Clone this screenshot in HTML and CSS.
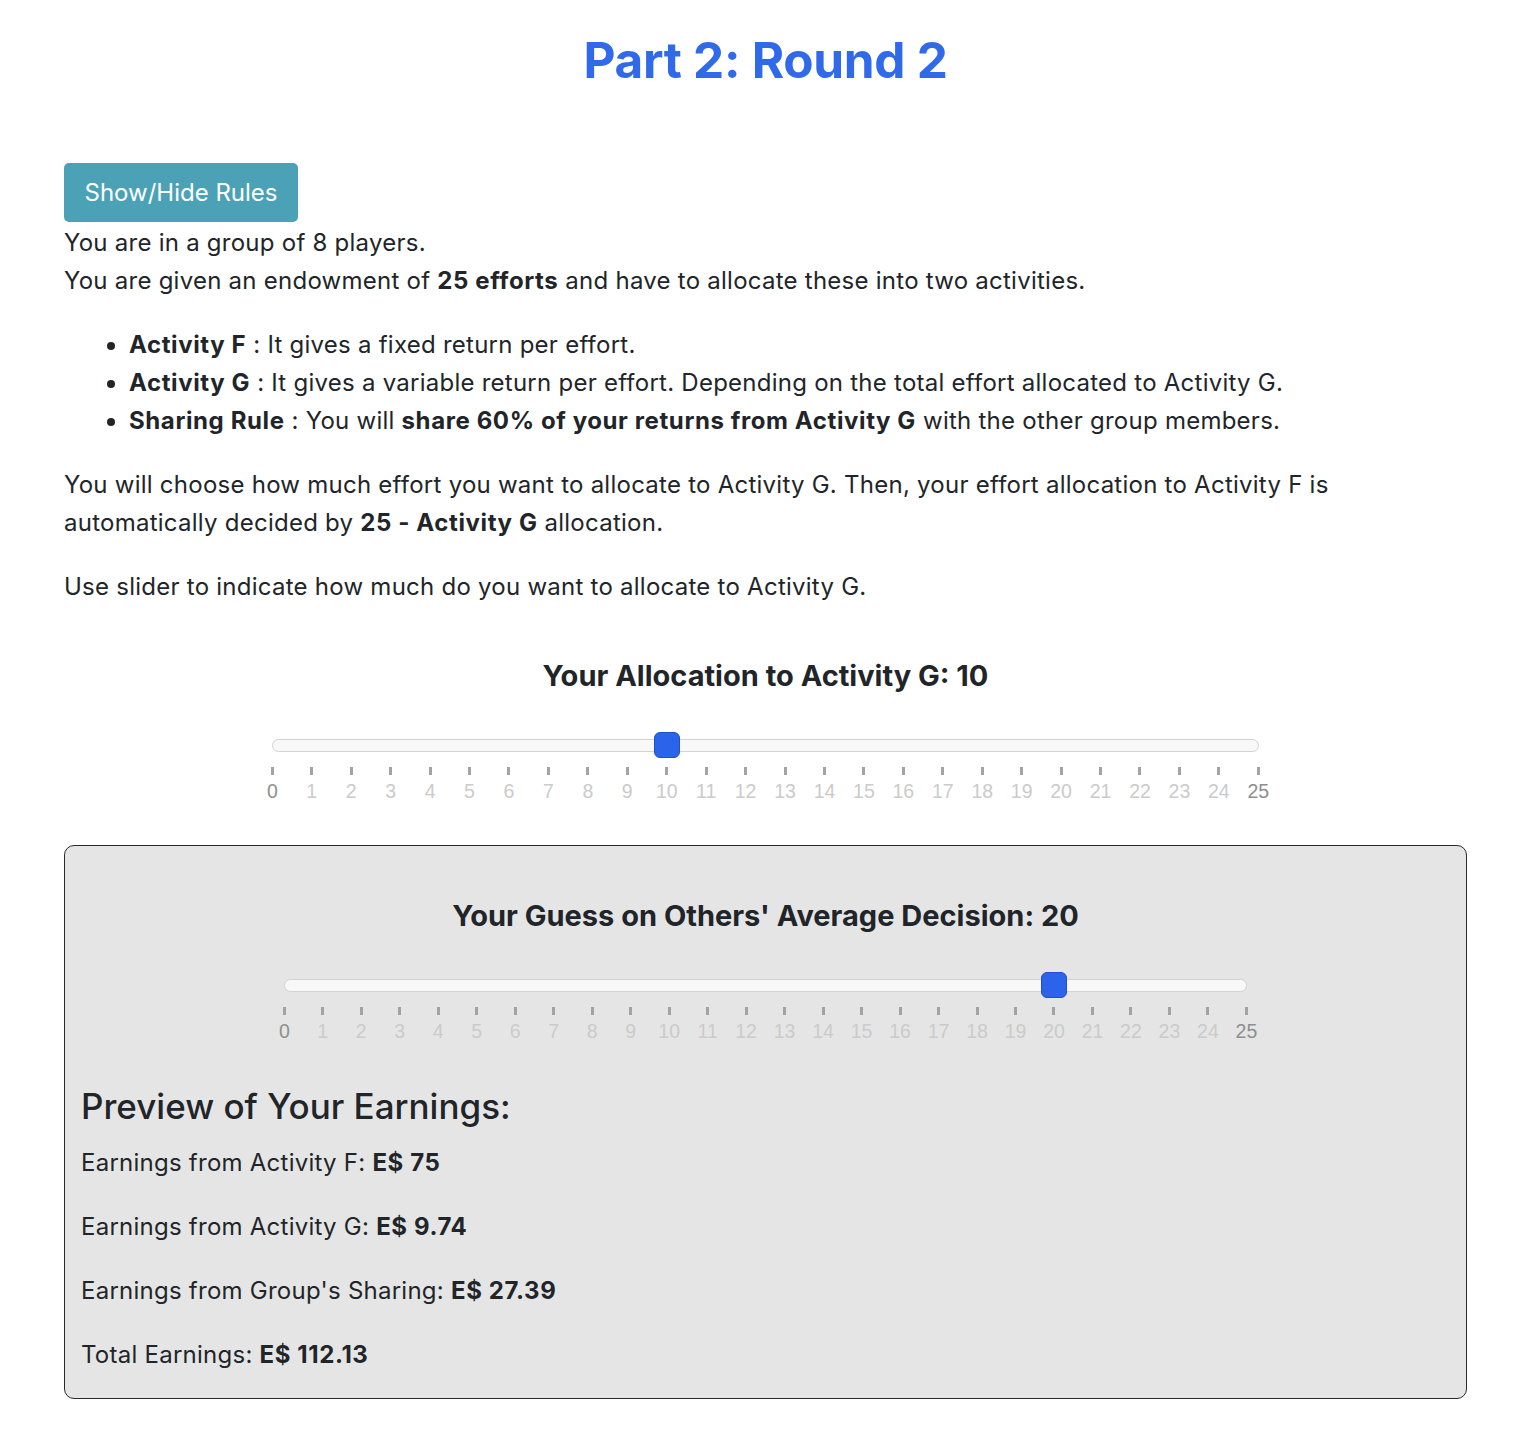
FILE: index.html
```html
<!DOCTYPE html>
<html lang="en">
<head>
<meta charset="utf-8">
<title>Part 2: Round 2</title>
<link rel="stylesheet" href="styles.css">
</head>
<body>
<div class="container">
  <h1 class="title">Part 2: Round 2</h1>
  <button class="btn-rules" type="button">Show/Hide Rules</button>
  <div class="rules">
    <div>You are in a group of 8 players.</div>
    <div>You are given an endowment of <b>25 efforts</b> and have to allocate these into two activities.</div>
    <ul class="rule-list">
      <li><b>Activity F</b> : It gives a fixed return per effort.</li>
      <li><b>Activity G</b> : It gives a variable return per effort. Depending on the total effort allocated to Activity G.</li>
      <li><b>Sharing Rule</b> : You will <b>share 60% of your returns from Activity G</b> with the other group members.</li>
    </ul>
  </div>
  <p>You will choose how much effort you want to allocate to Activity G. Then, your effort allocation to Activity F is automatically decided by <b>25 - Activity G</b> allocation.</p>
  <p>Use slider to indicate how much do you want to allocate to Activity G.</p>

  <div class="slider-block">
    <h4 class="slider-title">Your Allocation to Activity G: 10</h4>
    <div class="slider">
      <div class="rail">
        <div class="track"></div>
        <div class="handle" style="left: 40%;"></div>
      </div>
      <div class="grid">
        <div class="tick edge"><span class="mark"></span><span class="num">0</span></div>
        <div class="tick"><span class="mark"></span><span class="num">1</span></div>
        <div class="tick"><span class="mark"></span><span class="num">2</span></div>
        <div class="tick"><span class="mark"></span><span class="num">3</span></div>
        <div class="tick"><span class="mark"></span><span class="num">4</span></div>
        <div class="tick"><span class="mark"></span><span class="num">5</span></div>
        <div class="tick"><span class="mark"></span><span class="num">6</span></div>
        <div class="tick"><span class="mark"></span><span class="num">7</span></div>
        <div class="tick"><span class="mark"></span><span class="num">8</span></div>
        <div class="tick"><span class="mark"></span><span class="num">9</span></div>
        <div class="tick"><span class="mark"></span><span class="num">10</span></div>
        <div class="tick"><span class="mark"></span><span class="num">11</span></div>
        <div class="tick"><span class="mark"></span><span class="num">12</span></div>
        <div class="tick"><span class="mark"></span><span class="num">13</span></div>
        <div class="tick"><span class="mark"></span><span class="num">14</span></div>
        <div class="tick"><span class="mark"></span><span class="num">15</span></div>
        <div class="tick"><span class="mark"></span><span class="num">16</span></div>
        <div class="tick"><span class="mark"></span><span class="num">17</span></div>
        <div class="tick"><span class="mark"></span><span class="num">18</span></div>
        <div class="tick"><span class="mark"></span><span class="num">19</span></div>
        <div class="tick"><span class="mark"></span><span class="num">20</span></div>
        <div class="tick"><span class="mark"></span><span class="num">21</span></div>
        <div class="tick"><span class="mark"></span><span class="num">22</span></div>
        <div class="tick"><span class="mark"></span><span class="num">23</span></div>
        <div class="tick"><span class="mark"></span><span class="num">24</span></div>
        <div class="tick edge"><span class="mark"></span><span class="num">25</span></div>
      </div>
    </div>
  </div>

  <div class="guess-box">
    <div class="slider-block inner">
      <h4 class="slider-title">Your Guess on Others' Average Decision: 20</h4>
      <div class="slider">
        <div class="rail">
          <div class="track"></div>
          <div class="handle" style="left: 80%;"></div>
        </div>
        <div class="grid">
          <div class="tick edge"><span class="mark"></span><span class="num">0</span></div>
          <div class="tick"><span class="mark"></span><span class="num">1</span></div>
          <div class="tick"><span class="mark"></span><span class="num">2</span></div>
          <div class="tick"><span class="mark"></span><span class="num">3</span></div>
          <div class="tick"><span class="mark"></span><span class="num">4</span></div>
          <div class="tick"><span class="mark"></span><span class="num">5</span></div>
          <div class="tick"><span class="mark"></span><span class="num">6</span></div>
          <div class="tick"><span class="mark"></span><span class="num">7</span></div>
          <div class="tick"><span class="mark"></span><span class="num">8</span></div>
          <div class="tick"><span class="mark"></span><span class="num">9</span></div>
          <div class="tick"><span class="mark"></span><span class="num">10</span></div>
          <div class="tick"><span class="mark"></span><span class="num">11</span></div>
          <div class="tick"><span class="mark"></span><span class="num">12</span></div>
          <div class="tick"><span class="mark"></span><span class="num">13</span></div>
          <div class="tick"><span class="mark"></span><span class="num">14</span></div>
          <div class="tick"><span class="mark"></span><span class="num">15</span></div>
          <div class="tick"><span class="mark"></span><span class="num">16</span></div>
          <div class="tick"><span class="mark"></span><span class="num">17</span></div>
          <div class="tick"><span class="mark"></span><span class="num">18</span></div>
          <div class="tick"><span class="mark"></span><span class="num">19</span></div>
          <div class="tick"><span class="mark"></span><span class="num">20</span></div>
          <div class="tick"><span class="mark"></span><span class="num">21</span></div>
          <div class="tick"><span class="mark"></span><span class="num">22</span></div>
          <div class="tick"><span class="mark"></span><span class="num">23</span></div>
          <div class="tick"><span class="mark"></span><span class="num">24</span></div>
          <div class="tick edge"><span class="mark"></span><span class="num">25</span></div>
        </div>
      </div>
    </div>
    <h3 class="preview-title">Preview of Your Earnings:</h3>
    <p>Earnings from Activity F: <b>E$ 75</b></p>
    <p>Earnings from Activity G: <b>E$ 9.74</b></p>
    <p>Earnings from Group's Sharing: <b>E$ 27.39</b></p>
    <p class="last">Total Earnings: <b>E$ 112.13</b></p>
  </div>
</div>
</body>
</html>
```

FILE: styles.css
```css
* { box-sizing: border-box; }

html, body {
  margin: 0;
  padding: 0;
  background: #ffffff;
}

body {
  font-family: Inter, "Noto Sans", "Liberation Sans", sans-serif;
  font-size: 24px;
  line-height: 38px;
  letter-spacing: 0.25px;
  color: #212529;
}

b {
  font-weight: 700;
  letter-spacing: 0.6px;
}

.container {
  padding: 30px 59px 40px 64px;
}

.title {
  margin: 0;
  text-align: center;
  font-size: 49.5px;
  line-height: 61px;
  font-weight: 700;
  color: #306aeb;
  letter-spacing: -0.3px;
}

.btn-rules {
  display: block;
  margin-top: 72px;
  width: 234px;
  height: 59px;
  padding: 0;
  border: none;
  border-radius: 5px;
  background: #4ba2b6;
  color: #ffffff;
  font-family: inherit;
  font-size: 24px;
  line-height: 59px;
  letter-spacing: 0;
  cursor: pointer;
}

.rules { margin-top: 2px; }

.rule-list {
  margin: 26px 0 26px;
  padding-left: 65px;
}

p { margin: 0 0 26px; }

.slider-block {
  margin-top: 50px;
  margin-bottom: 43px;
  text-align: center;
}

.slider-title {
  margin: 0;
  font-size: 29px;
  line-height: 40px;
  font-weight: 700;
  letter-spacing: 0;
}

.slider {
  width: 70.3%;
  margin: 36px auto 0;
}

.rail {
  position: relative;
  height: 26px;
  display: flex;
  align-items: center;
}

.track {
  flex: 1;
  height: 13px;
  border: 1px solid #d3d3d3;
  border-radius: 7px;
  background: #f8f8f8;
}

.handle {
  position: absolute;
  top: 0;
  width: 26px;
  height: 26px;
  margin-left: -13px;
  border: 1px solid #1f50c8;
  border-radius: 6px;
  background: #2c63eb;
}

.grid {
  display: flex;
  justify-content: space-between;
  margin-top: 9px;
}

.tick {
  width: 0;
  display: flex;
  flex-direction: column;
  align-items: center;
}

.mark {
  display: block;
  width: 3px;
  height: 8px;
  background: #a3a3a3;
}

.num {
  display: block;
  margin-top: 5px;
  font-family: "Liberation Sans", Arial, sans-serif;
  font-size: 19.5px;
  line-height: 22px;
  letter-spacing: 0;
  color: #cbcbcb;
  white-space: nowrap;
}

.tick.edge .num { color: #8f8f8f; }

.guess-box {
  border: 1px solid #2a2a2a;
  border-radius: 10px;
  background: #e5e5e5;
  padding: 0 16px 24px;
}

.slider-block.inner {
  margin-top: 50px;
  margin-bottom: 44px;
}

.preview-title {
  margin: 0 0 17px;
  font-size: 35px;
  line-height: 41px;
  font-weight: 500;
  letter-spacing: 0;
}

.guess-box p.last { margin-bottom: 0; }
```
